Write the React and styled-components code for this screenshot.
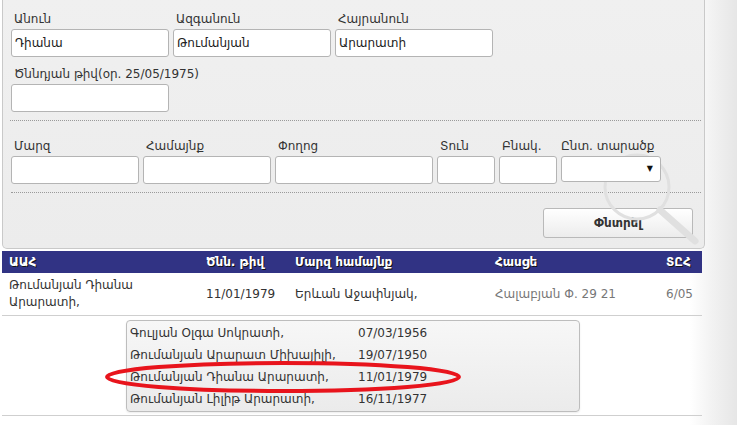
import styled, { createGlobalStyle } from "styled-components";

const GlobalStyle = createGlobalStyle`
	html, body {
		margin: 0;
		padding: 0;
	}
	body {
		width: 737px;
		height: 425px;
		overflow: hidden;
		font-family: "DejaVu Sans", Verdana, sans-serif;
		font-size: 12px;
		color: #333;
		background: linear-gradient(to right, #fff 0, #fff 690px, #f2f2f2 712px, #e6e6e6 737px);
	}
`;

const persons = [
	{ name: "Գուլյան Օլգա Սոկրատի,", date: "07/03/1956" },
	{ name: "Թումանյան Արարատ Միխայիլի,", date: "19/07/1950" },
	{ name: "Թումանյան Դիանա Արարատի,", date: "11/01/1979", marked: true },
	{ name: "Թումանյան Լիլիթ Արարատի,", date: "16/11/1977" },
];

const App = () => {
	return (
		<Page>
			<GlobalStyle />
			<Panel>
				<Watermark width="110" height="110" viewBox="0 0 110 110">
					<circle cx="40" cy="40" r="32" fill="none" stroke="#e0e0e0" strokeWidth="3" />
					<line x1="63" y1="63" x2="98" y2="94" stroke="#e0e0e0" strokeWidth="7" strokeLinecap="round" />
				</Watermark>
				<Row $spaced>
					<Field>
						<Label>Անուն</Label>
						<Input w={158} defaultValue="Դիանա" />
					</Field>
					<Field>
						<Label>Ազգանուն</Label>
						<Input w={158} defaultValue="Թումանյան" />
					</Field>
					<Field>
						<Label>Հայրանուն</Label>
						<Input w={158} defaultValue="Արարատի" />
					</Field>
				</Row>
				<Row>
					<Field>
						<Label>Ծննդյան թիվ(օր. 25/05/1975)</Label>
						<Input w={158} />
					</Field>
				</Row>
				<Separator />
				<Row>
					<Field>
						<Label>Մարզ</Label>
						<Input w={128} />
					</Field>
					<Field>
						<Label>Համայնք</Label>
						<Input w={128} />
					</Field>
					<Field>
						<Label>Փողոց</Label>
						<Input w={158} />
					</Field>
					<Field>
						<Label>Տուն</Label>
						<Input w={58} />
					</Field>
					<Field>
						<Label>Բնակ.</Label>
						<Input w={58} />
					</Field>
					<Field>
						<Label $tight>Ընտ. տարածք</Label>
						<Select>
							<Arrow>▼</Arrow>
						</Select>
					</Field>
				</Row>
				<Separator $bottom />
				<Actions>
					<SearchButton type="button">Փնտրել</SearchButton>
				</Actions>
			</Panel>

			<Table>
				<HeadRow>
					<HeadCell>ԱԱՀ</HeadCell>
					<HeadCell>Ծնն. թիվ</HeadCell>
					<HeadCell>Մարզ համայնք</HeadCell>
					<HeadCell>Հասցե</HeadCell>
					<HeadCell>ՏԸՀ</HeadCell>
				</HeadRow>
				<BodyRow>
					<Cell>
						Թումանյան Դիանա
						<br />
						Արարատի,
					</Cell>
					<Cell>11/01/1979</Cell>
					<Cell>Երևան Աջափնյակ,</Cell>
					<Cell $muted>Հալաբյան Փ. 29 21</Cell>
					<Cell $muted>6/05</Cell>
				</BodyRow>
				<PopupRow>
					<Popup>
						{persons.map((p) => (
							<PopupItem key={p.name}>
								<PopupName>{p.name}</PopupName>
								<span>{p.date}</span>
							</PopupItem>
						))}
						<Mark width="358" height="34" viewBox="0 0 358 34">
							<ellipse cx="179" cy="17" rx="176" ry="14" fill="none" stroke="#e8141c" strokeWidth="4" />
						</Mark>
					</Popup>
				</PopupRow>
			</Table>
		</Page>
	);
};

export default App;

const Page = styled.div`
	padding-left: 2px;
	width: 703px;
`;

const Panel = styled.div`
	position: relative;
	display: flex;
	flex-direction: column;
	padding: 11px 0 10px 8px;
	background: linear-gradient(#f0f0f0, #ececec);
	border: 1px solid #c9c9c9;
	border-top: none;
	border-radius: 0 0 5px 5px;
`;

const Watermark = styled.svg`
	position: absolute;
	left: 594px;
	top: 147px;
`;

const Row = styled.div`
	position: relative;
	display: flex;
	gap: 4px;
	margin-bottom: ${(props) => (props.$spaced ? "9px" : "0")};
`;

const Field = styled.div`
	display: flex;
	flex-direction: column;
	gap: 2px;
`;

const Label = styled.label`
	height: 16px;
	line-height: 16px;
	padding-left: ${(props) => (props.$tight ? "0" : "3px")};
	color: #333;
	white-space: nowrap;
`;

const Input = styled.input`
	box-sizing: border-box;
	width: ${(props) => props.w}px;
	height: 28px;
	margin: 0;
	padding: 0 3px;
	font-family: inherit;
	font-size: 12px;
	color: #222;
	background: #fff;
	border: 1px solid #b4b4b4;
	border-radius: 3px;
	outline: none;
`;

const Select = styled.div`
	position: relative;
	box-sizing: border-box;
	width: 100px;
	height: 26px;
	background: #fff;
	border: 1px solid #b4b4b4;
	border-radius: 3px;
`;

const Arrow = styled.span`
	position: absolute;
	right: 7px;
	top: 7px;
	font-size: 8px;
	color: #111;
`;

const Separator = styled.div`
	margin: ${(props) => (props.$bottom ? "8px 3px 15px 0" : "8px 3px 17px -1px")};
	border-top: 1px dotted #9a9a9a;
`;

const Actions = styled.div`
	display: flex;
	justify-content: flex-end;
	padding-right: 11px;
`;

const SearchButton = styled.button`
	width: 150px;
	height: 30px;
	font-family: inherit;
	font-size: 12px;
	font-weight: bold;
	color: #333;
	background: linear-gradient(#ffffff, #ececec);
	border: 1px solid #b9b9b9;
	border-radius: 3px;
`;

const Table = styled.div`
	margin-top: 2px;
	width: 700px;
`;

const columns = "197px 89px 200px 171px 1fr";

const HeadRow = styled.div`
	display: grid;
	grid-template-columns: ${columns};
	height: 22px;
	background: #313384;
`;

const HeadCell = styled.div`
	padding-left: 7px;
	line-height: 22px;
	font-weight: bold;
	color: #fff;
	text-shadow: 1px 1px 0 #111;
	white-space: nowrap;
`;

const BodyRow = styled.div`
	display: grid;
	grid-template-columns: ${columns};
	align-items: center;
	height: 42px;
	border-bottom: 1px solid #cfcfcf;
`;

const Cell = styled.div`
	padding-left: 7px;
	line-height: 17px;
	color: ${(props) => (props.$muted ? "#777" : "#333")};
	white-space: nowrap;
`;

const PopupRow = styled.div`
	padding: 4px 0 3px 124px;
	border-bottom: 1px solid #cfcfcf;
`;

const Popup = styled.div`
	position: relative;
	width: 452px;
	padding: 1px 0;
	background: linear-gradient(#f7f7f7, #ebebeb);
	border: 1px solid #bdbdbd;
	border-radius: 4px;
	box-shadow: 0 1px 2px rgba(0, 0, 0, 0.08);
`;

const PopupItem = styled.div`
	display: flex;
	height: 22px;
	line-height: 22px;
	padding-left: 3px;
	color: #333;
	white-space: nowrap;
`;

const PopupName = styled.span`
	width: 228px;
	overflow: hidden;
`;

const Mark = styled.svg`
	position: absolute;
	left: -23px;
	top: 39px;
`;
